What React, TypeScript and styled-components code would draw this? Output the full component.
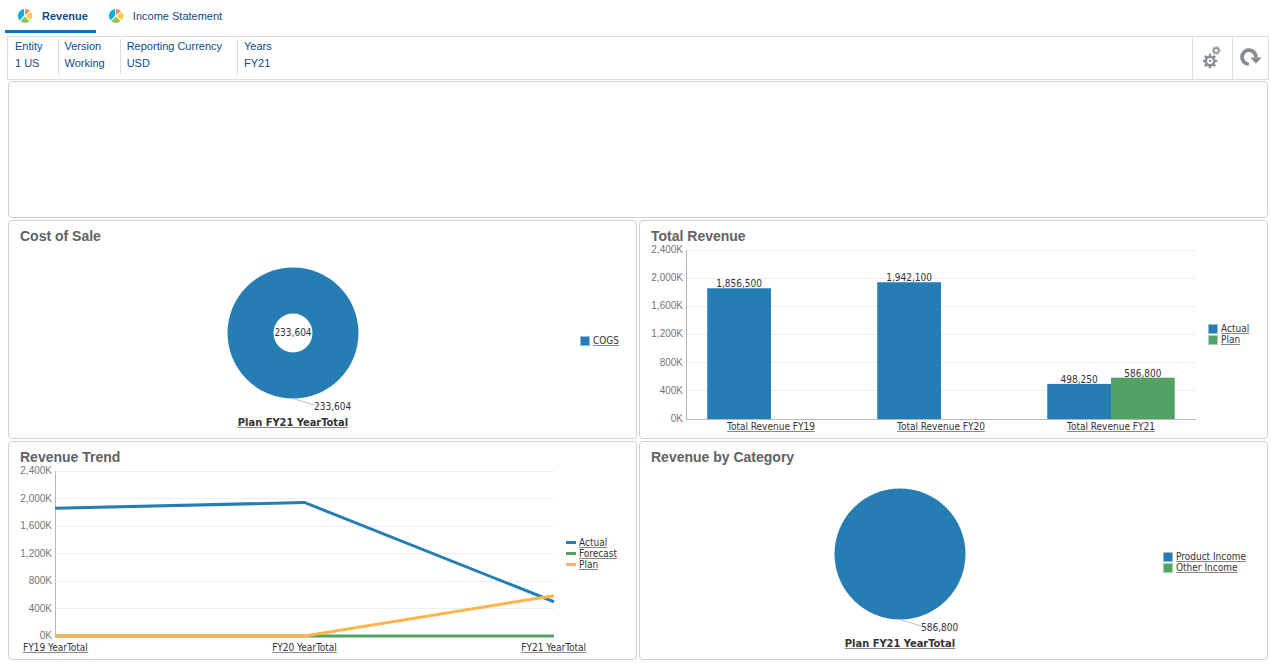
import React from 'react';
import styled, { createGlobalStyle } from 'styled-components';

const BLUE = '#267db3';
const GREEN = '#52a266';
const ORANGE = '#ffb54d';
const ARIAL = '"Liberation Sans", Arial, sans-serif';
const TAHOMA = 'Tahoma, "DejaVu Sans Condensed", "DejaVu Sans", sans-serif';

const GlobalStyle = createGlobalStyle`
  * { box-sizing: border-box; }
  body { margin: 0; background: #fff; font-family: ${ARIAL}; font-size: 11px; color: #0f4a85; }
`;

const Page = styled.main`
  display: flex;
  flex-direction: column;
  padding: 0 3px 4px 8px;
`;

const Tabs = styled.nav`
  display: flex;
  height: 33px;
  margin: 0 0 3px -3px;
`;

const Tab = styled.button<{ $active?: boolean }>`
  display: flex;
  align-items: center;
  gap: 9px;
  padding: 2px 8px 0 12px;
  border: 0;
  border-bottom: 3px solid ${(p) => (p.$active ? '#0572ce' : 'transparent')};
  background: none;
  color: #0f4a85;
  font: ${(p) => (p.$active ? 'bold' : 'normal')} 11px ${ARIAL};
`;

const Toolbar = styled.header`
  display: flex;
  height: 44px;
  margin: 0 -1px 1px -1px;
  border: 1px solid #d6dfe6;
`;

const Members = styled.dl`
  display: flex;
  flex: 1;
  margin: 0;
  padding: 2px 0 4px 1px;
`;

const Member = styled.div`
  padding: 0 15px 0 6px;
  line-height: 17px;
  & + & { border-left: 1px solid #d6dfe6; }
  dt, dd { margin: 0; }
  dt { margin-top: -1px; }
`;

const ToolButton = styled.button<{ $width: number }>`
  display: grid;
  place-items: center;
  width: ${(p) => p.$width}px;
  padding: 0;
  border: 0;
  border-left: 1px solid #d6dfe6;
  background: none;
`;

const Dashboard = styled.div`
  display: grid;
  grid-template-columns: 1fr 1fr;
  gap: 2px;
`;

const Panel = styled.section<{ $wide?: boolean }>`
  grid-column: ${(p) => (p.$wide ? '1 / -1' : 'auto')};
  min-height: ${(p) => (p.$wide ? 137 : 219)}px;
  display: flex;
  flex-direction: column;
  border: 1px solid #d0d0d0;
  border-radius: 4px;
`;

const Title = styled.h2`
  margin: 0;
  padding: 7px 0 0 11px;
  font-size: 14px;
  line-height: 16px;
  color: #626262;
`;

const PieBody = styled.div<{ $legend: number }>`
  flex: 1;
  display: grid;
  grid-template-columns: 1fr ${(p) => p.$legend}px;
  gap: 6px;
  align-items: center;
  padding-left: 3px;
`;

const Figure = styled.figure`
  align-self: start;
  display: flex;
  flex-direction: column;
  align-items: center;
  gap: 4px;
  margin: 0;
  padding-top: 23px;
  svg { overflow: visible; }
`;

const ChartLink = styled.a`
  color: #333;
  font: 10px/12px ${TAHOMA};
  white-space: nowrap;
  text-underline-offset: 1px;
  text-decoration-color: #888;
`;

const PieLink = styled(ChartLink)`
  font: bold 11px/14px ${TAHOMA};
`;

const LegendList = styled.ul`
  margin: 0;
  padding: 0;
  list-style: none;
`;

const LegendItem = styled.li`
  display: flex;
  align-items: center;
  gap: 3px;
  height: 11px;
`;

const Swatch = styled.span<{ $color: string; $line?: boolean }>`
  width: 10px;
  height: ${(p) => (p.$line ? 3 : 10)}px;
  border: ${(p) => (p.$line ? 0 : 1)}px solid rgba(255, 255, 255, 0.5);
  background: ${(p) => p.$color};
`;

const AxisBody = styled.div<{ $legend: number; $height: number }>`
  display: grid;
  grid-template-columns: 46px 1fr ${(p) => p.$legend}px;
  grid-template-rows: ${(p) => p.$height}px auto;
  align-items: center;
  padding-top: 6px;
`;

const Scale = styled.div`
  display: flex;
  flex-direction: column;
  justify-content: space-between;
  align-self: stretch;
  margin: -5px 0;
  padding-right: 3px;
  color: #757575;
  font-size: 10px;
  line-height: 10px;
  text-align: right;
`;

const Plot = styled.svg`
  width: 100%;
  height: 100%;
  overflow: visible;
`;

const ValueText = styled.text`
  font: 10px ${TAHOMA};
  fill: #333;
`;

const Categories = styled.div<{ $edge?: boolean }>`
  grid-column: 2;
  display: flex;
  justify-content: space-between;
  margin: ${(p) => (p.$edge ? '6px -32px 0' : '2px 0 0')};
  a { flex: ${(p) => (p.$edge ? 'none' : 1)}; text-align: center; }
`;

const LegendCell = styled.div`
  padding-left: 12px;
  width: max-content;
`;

type Series = { name: string; color: string };

function Legend({ items, line }: { items: Series[]; line?: boolean }) {
  return (
    <LegendList>
      {items.map((s) => (
        <LegendItem key={s.name}>
          <Swatch $color={s.color} $line={line} />
          <ChartLink href="#">{s.name}</ChartLink>
        </LegendItem>
      ))}
    </LegendList>
  );
}

const MAX = 2400000;
const TICKS = ['2,400K', '2,000K', '1,600K', '1,200K', '800K', '400K', '0K'];

function Grid() {
  return (
    <g shapeRendering="crispEdges">
      {TICKS.map((t, i) => (
        <line key={t} x1="0" x2="100%" y1={`${(i * 100) / 6}%`} y2={`${(i * 100) / 6}%`} stroke={i === 6 ? '#b8b8b8' : '#ebeef2'} />
      ))}
      <line x1="0" x2="0" y1="0" y2="100%" stroke="#b8b8b8" />
    </g>
  );
}

function TickLabels() {
  return <Scale>{TICKS.map((t) => <span key={t}>{t}</span>)}</Scale>;
}

const revenue = [
  { label: 'Total Revenue FY19', values: [1856500] },
  { label: 'Total Revenue FY20', values: [1942100] },
  { label: 'Total Revenue FY21', values: [498250, 586800] },
];

function BarChart() {
  const colors = [BLUE, GREEN];
  return (
    <AxisBody $legend={71} $height={169}>
      <TickLabels />
      <Plot>
        <Grid />
        {revenue.flatMap((group, g) =>
          group.values.map((value, v) => {
            const x = ((g + 0.125 + v * 0.375) * 100) / 3;
            const h = (value / MAX) * 100;
            return (
              <g key={`${g}-${v}`}>
                <rect x={`${x}%`} y={`${100 - h}%`} width="12.5%" height={`${h}%`} fill={colors[v]} />
                <ValueText x={`${x + 6.25}%`} y={`${100 - h}%`} dy={-1} textAnchor="middle">
                  {value.toLocaleString('en-US')}
                </ValueText>
              </g>
            );
          }),
        )}
      </Plot>
      <LegendCell>
        <Legend items={[{ name: 'Actual', color: BLUE }, { name: 'Plan', color: GREEN }]} />
      </LegendCell>
      <Categories>
        {revenue.map((g) => <ChartLink key={g.label} href="#">{g.label}</ChartLink>)}
      </Categories>
    </AxisBody>
  );
}

const trend = [
  { name: 'Actual', color: BLUE, values: [1856500, 1942100, 498250] },
  { name: 'Forecast', color: GREEN, values: [0, 0, 0] },
  { name: 'Plan', color: ORANGE, values: [0, 0, 586800] },
];

function LineChart() {
  return (
    <AxisBody $legend={82} $height={165}>
      <TickLabels />
      <Plot>
        <Grid />
        <svg width="100%" height="100%" viewBox="0 0 100 100" preserveAspectRatio="none" overflow="visible">
          {trend.map((s) => (
            <polyline
              key={s.name}
              points={s.values.map((v, i) => `${i * 50},${100 - (v / MAX) * 100}`).join(' ')}
              fill="none"
              stroke={s.color}
              strokeWidth="3"
              vectorEffect="non-scaling-stroke"
            />
          ))}
        </svg>
      </Plot>
      <LegendCell><Legend line items={trend} /></LegendCell>
      <Categories $edge>
        {['FY19', 'FY20', 'FY21'].map((y) => <ChartLink key={y} href="#">{y} YearTotal</ChartLink>)}
      </Categories>
    </AxisBody>
  );
}

function PieChart({ value, hole, legend, legendWidth }: { value: string; hole?: boolean; legend: Series[]; legendWidth: number }) {
  return (
    <PieBody $legend={legendWidth}>
      <Figure>
        <svg width="132" height="145">
          <circle cx="66" cy="66" r="65.5" fill={BLUE} />
          {hole && <circle cx="66" cy="66" r="19.5" fill="#fff" />}
          {hole && <ValueText x="66" y="69" textAnchor="middle">{value}</ValueText>}
          <path d="M66 131.5L87 138" stroke="#b5bfcf" fill="none" />
          <ValueText x="87" y="143">{value}</ValueText>
        </svg>
        <figcaption><PieLink href="#">Plan FY21 YearTotal</PieLink></figcaption>
      </Figure>
      <Legend items={legend} />
    </PieBody>
  );
}

function TabIcon() {
  return (
    <svg width="16" height="16" viewBox="0 0 16 16" aria-hidden="true">
      <path d="M7 7.6L2.7 12.4A7 7 0 0 1 7 0.9Z" fill="#00b2dc" />
      <path d="M8 7V0.9A7 7 0 0 1 13 3Z" fill="#f0896b" />
      <path d="M8.8 7.9L13.7 3.7A7 7 0 0 1 13.4 12.6Z" fill="#fccb48" />
      <path d="M7.8 8.4L12.6 13.3A7 7 0 0 1 3.3 13.3Z" fill="#94c35c" />
    </svg>
  );
}

function Gear({ cx, cy, r, teeth }: { cx: number; cy: number; r: number; teeth: number }) {
  return (
    <g transform={`translate(${cx} ${cy})`}>
      <circle r={r * 0.58} fill="none" stroke="#8a8f94" strokeWidth={r * 0.36} />
      {Array.from({ length: teeth }, (_, i) => (
        <rect key={i} x={-r * 0.16} y={-r} width={r * 0.32} height={r * 0.35} fill="#8a8f94" transform={`rotate(${(i * 360) / teeth})`} />
      ))}
    </g>
  );
}

export default function App() {
  return (
    <>
      <GlobalStyle />
      <Page>
        <Tabs>
          <Tab $active><TabIcon />Revenue</Tab>
          <Tab><TabIcon />Income Statement</Tab>
        </Tabs>
        <Toolbar>
          <Members>
            <Member><dt>Entity</dt><dd>1 US</dd></Member>
            <Member><dt>Version</dt><dd>Working</dd></Member>
            <Member><dt>Reporting Currency</dt><dd>USD</dd></Member>
            <Member><dt>Years</dt><dd>FY21</dd></Member>
          </Members>
          <ToolButton $width={40} aria-label="Settings">
            <svg width="20" height="24" viewBox="0 0 20 24">
              <Gear cx={7} cy={15} r={7.3} teeth={8} />
              <circle cx="7" cy="15" r="1.2" fill="#8a8f94" />
              <Gear cx={13.2} cy={4.5} r={4.3} teeth={8} />
            </svg>
          </ToolButton>
          <ToolButton $width={36} aria-label="Refresh">
            <svg width="24" height="20" viewBox="0 0 24 20">
              <path d="M9.8 16.2A7 7 0 1 1 17 9.5" fill="none" stroke="#878c91" strokeWidth="3.8" />
              <path d="M11.2 9.4H22.8L17 15.4Z" fill="#878c91" />
            </svg>
          </ToolButton>
        </Toolbar>
        <Dashboard>
          <Panel $wide />
          <Panel>
            <Title>Cost of Sale</Title>
            <PieChart value="233,604" hole legendWidth={56} legend={[{ name: 'COGS', color: BLUE }]} />
          </Panel>
          <Panel>
            <Title>Total Revenue</Title>
            <BarChart />
          </Panel>
          <Panel>
            <Title>Revenue Trend</Title>
            <LineChart />
          </Panel>
          <Panel>
            <Title>Revenue by Category</Title>
            <PieChart
              value="586,800"
              legendWidth={104}
              legend={[{ name: 'Product Income', color: BLUE }, { name: 'Other Income', color: GREEN }]}
            />
          </Panel>
        </Dashboard>
      </Page>
    </>
  );
}
